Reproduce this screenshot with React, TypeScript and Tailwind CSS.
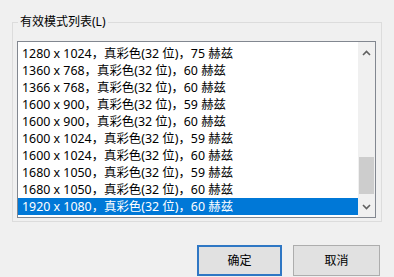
const modes = [
  '1280 x 1024，真彩色(32 位)，75 赫兹',
  '1360 x 768，真彩色(32 位)，60 赫兹',
  '1366 x 768，真彩色(32 位)，60 赫兹',
  '1600 x 900，真彩色(32 位)，59 赫兹',
  '1600 x 900，真彩色(32 位)，60 赫兹',
  '1600 x 1024，真彩色(32 位)，59 赫兹',
  '1600 x 1024，真彩色(32 位)，60 赫兹',
  '1680 x 1050，真彩色(32 位)，59 赫兹',
  '1680 x 1050，真彩色(32 位)，60 赫兹',
  '1920 x 1080，真彩色(32 位)，60 赫兹',
];

const Chevron = ({ up }: { up?: boolean }) => (
  <svg width="9" height="6" viewBox="0 0 9 6" className="block">
    <path
      d={up ? 'M1 5 L4.5 1.5 L8 5' : 'M1 1 L4.5 4.5 L8 1'}
      fill="none"
      stroke="#606060"
      strokeWidth="1.6"
    />
  </svg>
);

export default function App() {
  return (
    <div
      className="w-[394px] h-[277px] bg-[#f0f0f0] overflow-hidden text-[12px] text-black"
      style={{ fontFamily: '"Noto Sans", "Noto Sans CJK SC", sans-serif' }}
    >
      {/* group box */}
      <div className="relative ml-[12px] mt-[22px] w-[370px] h-[200px] border border-[#dcdcdc]">
        <span className="absolute left-[5px] top-[-10px] bg-[#f0f0f0] px-[2px] leading-[18px]">
          有效模式列表(L)
        </span>
        {/* list box */}
        <div className="ml-[4px] mt-[18px] w-[359px] h-[177px] border border-[#828790] bg-white flex">
          <div className="flex-1 pt-[3px] overflow-hidden text-[12.4px]">
            {modes.map((m, i) => (
              <div
                key={i}
                className={`h-[17px] leading-[17px] pl-[4px] whitespace-nowrap ${
                  i === modes.length - 1 ? 'bg-[#0078d7] text-white' : ''
                }`}
              >
                {m}
              </div>
            ))}
          </div>
          {/* scrollbar */}
          <div className="w-[17px] bg-[#f0f0f0] flex flex-col">
            <div className="h-[17px] flex items-center justify-center mt-[2px]">
              <Chevron up />
            </div>
            <div className="flex-1 flex flex-col">
              <div className="h-[96px]" />
              <div className="h-[37px] bg-[#cdcdcd] mx-[1px]" />
            </div>
            <div className="h-[20px] flex items-center justify-center">
              <Chevron />
            </div>
          </div>
        </div>
      </div>
      {/* buttons */}
      <div className="flex mt-[23px] ml-[197px] gap-[11px]">
        <button className="w-[85px] h-[31px] bg-[#e1e1e1] border-2 border-[#2f77c4] flex items-center justify-center">
          确定
        </button>
        <button className="w-[87px] h-[31px] bg-[#e1e1e1] border border-[#adadad] flex items-center justify-center">
          取消
        </button>
      </div>
    </div>
  );
}
